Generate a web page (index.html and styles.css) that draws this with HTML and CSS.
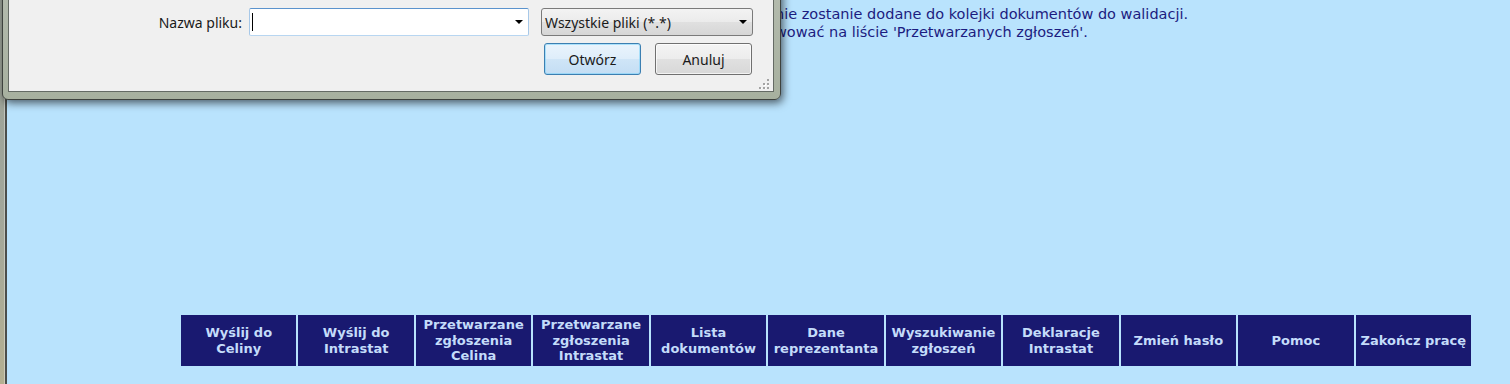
FILE: index.html
```html
<!DOCTYPE html>
<html lang="pl">
<head>
<meta charset="utf-8">
<title>Wysyłanie zgłoszeń</title>
<link rel="stylesheet" href="styles.css">
</head>
<body>
<div class="screen">
  <div class="frame-edge"></div>
  <main class="page">
    <p class="info">
      <span class="info-line">nie zostanie dodane do kolejki dokumentów do walidacji.</span>
      <span class="info-line">wować na liście 'Przetwarzanych zgłoszeń'.</span>
    </p>
    <nav class="menu">
      <a class="menu-item" href="#">Wyślij do Celiny</a>
      <a class="menu-item" href="#">Wyślij do Intrastat</a>
      <a class="menu-item" href="#">Przetwarzane zgłoszenia Celina</a>
      <a class="menu-item" href="#">Przetwarzane zgłoszenia Intrastat</a>
      <a class="menu-item" href="#">Lista dokumentów</a>
      <a class="menu-item" href="#">Dane reprezentanta</a>
      <a class="menu-item" href="#">Wyszukiwanie zgłoszeń</a>
      <a class="menu-item" href="#">Deklaracje Intrastat</a>
      <a class="menu-item" href="#">Zmień hasło</a>
      <a class="menu-item" href="#">Pomoc</a>
      <a class="menu-item" href="#">Zakończ pracę</a>
    </nav>
  </main>

  <div class="dialog">
    <div class="dialog-body">
      <div class="file-row">
        <label class="file-label">Nazwa pliku:</label>
        <div class="combo combo-file">
          <span class="caret"></span>
          <span class="arrow"></span>
        </div>
        <div class="combo combo-filter">
          <span class="combo-text">Wszystkie pliki (*.*)</span>
          <span class="arrow"></span>
        </div>
      </div>
      <div class="button-row">
        <button class="btn btn-default">Otwórz</button>
        <button class="btn">Anuluj</button>
      </div>
      <svg class="grip" width="10" height="10" viewBox="0 0 10 10">
        <rect x="9" y="1" width="1" height="1" fill="#fff"/>
        <rect x="8" y="0" width="2" height="2" fill="#a3a3a3"/>
        <rect x="5" y="5" width="2" height="2" fill="#fff"/>
        <rect x="4" y="4" width="2" height="2" fill="#a3a3a3"/>
        <rect x="9" y="5" width="1" height="2" fill="#fff"/>
        <rect x="8" y="4" width="2" height="2" fill="#a3a3a3"/>
        <rect x="1" y="9" width="2" height="1" fill="#fff"/>
        <rect x="0" y="8" width="2" height="2" fill="#a3a3a3"/>
        <rect x="5" y="9" width="2" height="1" fill="#fff"/>
        <rect x="4" y="8" width="2" height="2" fill="#a3a3a3"/>
        <rect x="8" y="8" width="2" height="2" fill="#a3a3a3"/>
      </svg>
    </div>
  </div>
</div>
</body>
</html>
```

FILE: styles.css
```css
html, body {
  margin: 0;
  padding: 0;
}

body {
  background: #b9e3fd;
  height: 384px;
  overflow: hidden;
}

.screen {
  position: relative;
  display: flex;
  height: 384px;
}

/* browser window frame edge on the left */
.frame-edge {
  flex: none;
  width: 7px;
  background:
    linear-gradient(to right, transparent 0 4px, rgba(255,255,255,0.35) 4px 5px, #4b4e4b 5px 7px),
    linear-gradient(#9aa197, #a2a79b 55%, #b4b092);
}

.page {
  flex: 1;
  display: flex;
  flex-direction: column;
  min-width: 0;
}

.info {
  margin: 0;
  padding: 6px 0 0 768px;
  font: 14.5px/17.5px Verdana, "DejaVu Sans", sans-serif;
  color: #1c1c80;
}

.info-line {
  display: block;
  white-space: nowrap;
}

.menu {
  margin: auto 0 18px 174px;
  width: 1290px;
  display: grid;
  grid-template-columns: repeat(11, minmax(0, 1fr));
  gap: 2px;
}

.menu-item {
  height: 51px;
  display: flex;
  align-items: center;
  justify-content: center;
  text-align: center;
  padding: 0 2px;
  background: #191970;
  color: #c4dcfa;
  font: bold 13px/15.5px Verdana, "DejaVu Sans", sans-serif;
  text-decoration: none;
}

/* file open dialog */
.dialog {
  position: absolute;
  left: 2px;
  top: -30px;
  width: 779px;
  height: 130px;
  box-sizing: border-box;
  border: 1px solid #3e423e;
  border-radius: 0 0 6px 6px;
  padding: 6px 6px 7px 5px;
  background: linear-gradient(#b6bdb0, #a7b09f);
  box-shadow: 2px 3px 9px rgba(0, 0, 0, 0.6);
  font-family: "Noto Sans", sans-serif;
  font-size: 14px;
  color: #1a1a1a;
}

.dialog-body {
  position: relative;
  height: 100%;
  box-sizing: border-box;
  border: 1px solid #646a64;
  background: #f0f0f0;
  padding-top: 30px;
}

.file-row {
  display: flex;
  align-items: center;
  height: 28px;
}

.file-label {
  width: 233px;
  margin-right: 7px;
  text-align: right;
}

.combo {
  box-sizing: border-box;
  height: 28px;
  display: flex;
  align-items: center;
  justify-content: space-between;
  padding: 0 5px 0 2px;
  border-radius: 2px;
}

.combo-file {
  width: 280px;
  margin-right: 12px;
  background: #fff;
  border: 1px solid;
  border-color: #5b93cd #a7c8e8 #b8d6f1 #a7c8e8;
}

.combo-filter {
  width: 212px;
  border: 1px solid #7a7a7a;
  border-radius: 3px;
  background: linear-gradient(#f3f3f3 0%, #ebebeb 50%, #e0e0e0 51%, #d6d6d6 100%);
  padding-left: 3px;
}

.caret {
  width: 1px;
  height: 18px;
  background: #000;
}

.arrow {
  width: 0;
  height: 0;
  border-left: 4px solid transparent;
  border-right: 4px solid transparent;
  border-top: 4px solid #000;
}

.button-row {
  display: flex;
  justify-content: flex-end;
  gap: 14px;
  margin-top: 7px;
  padding-right: 21px;
}

.btn {
  box-sizing: border-box;
  width: 97px;
  height: 32px;
  padding: 0;
  border: 1px solid #707070;
  border-radius: 3px;
  background: linear-gradient(#f4f4f4 0%, #ececec 50%, #e0e0e0 51%, #d8d8d8 100%);
  box-shadow: inset 0 0 0 1px rgba(255, 255, 255, 0.7);
  font: inherit;
  color: #1a1a1a;
}

.btn-default {
  border-color: #3c7fb1;
  background: linear-gradient(#eaf4fc 0%, #deedfa 50%, #cfe5f7 51%, #c4def4 100%);
  box-shadow: inset 0 0 0 1px rgba(120, 210, 250, 0.55);
}

.grip {
  position: absolute;
  left: 750px;
  top: 101px;
}
```
